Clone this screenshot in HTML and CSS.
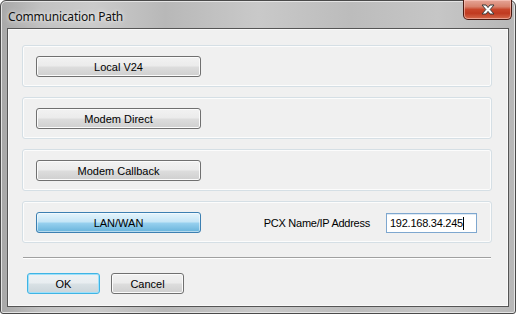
FILE: index.html
```html
<!DOCTYPE html>
<html>
<head>
<meta charset="utf-8">
<link rel="stylesheet" href="styles.css">
</head>
<body>
<div class="window">
  <div class="titlebar">
    <span class="title">Communication Path</span>
    <button class="close" aria-label="Close">
      <svg width="16" height="11" viewBox="0 0 16 11">
        <path d="M2 1 H6 L8 3.6 L10 1 H14 L10.2 5.5 L14 10 H10 L8 7.4 L6 10 H2 L5.8 5.5 Z" fill="#fff" stroke="#3b3b3b" stroke-width="1" stroke-linejoin="round"/>
      </svg>
    </button>
  </div>
  <div class="client">
    <div class="group"><button class="btn wide">Local V24</button></div>
    <div class="group"><button class="btn wide">Modem Direct</button></div>
    <div class="group"><button class="btn wide">Modem Callback</button></div>
    <div class="group">
      <button class="btn wide active">LAN/WAN</button>
      <span class="label">PCX Name/IP Address</span>
      <div class="field"><span>192.168.34.245</span><span class="caret"></span></div>
    </div>
    <div class="separator"></div>
    <div class="actions">
      <button class="btn small default">OK</button>
      <button class="btn small">Cancel</button>
    </div>
  </div>
</div>
</body>
</html>
```
FILE: styles.css
```css
html, body {
  margin: 0;
  padding: 0;
  background: #ffffff;
}
.window {
  width: 516px;
  height: 314px;
  box-sizing: border-box;
  border: 1px solid #4a4a4a;
  border-radius: 6px 6px 3px 3px;
  background: linear-gradient(to right, #a8a8a8 0%, #c2c2c2 8%, #cbcbcb 18%, #b8b8b8 32%, #c9c9c9 50%, #bcbcbc 68%, #c6c6c6 85%, #b7b7b7 100%);
  box-shadow: inset 0 0 0 1px #e4e4e4;
  padding: 0 6px 6px 6px;
  display: flex;
  flex-direction: column;
  font-family: "Liberation Sans", Arial, sans-serif;
}
.titlebar {
  height: 28px;
  display: flex;
  align-items: flex-start;
  justify-content: space-between;
  position: relative;
}
.title {
  font-family: "Noto Sans", "Open Sans", sans-serif;
  font-size: 12px;
  letter-spacing: -0.2px;
  color: #111;
  margin-top: 7px;
  margin-left: 1px;
  text-shadow: 0 0 6px rgba(255,255,255,0.8), 0 0 3px rgba(255,255,255,0.6);
}
.close {
  margin: -1px -3px 0 0;
  width: 49px;
  height: 20px;
  padding: 0;
  border: 1px solid #4b1a12;
  border-top: none;
  border-radius: 0 0 5px 5px;
  background: linear-gradient(to bottom, #e5a597 0%, #d8826d 35%, #c8462b 50%, #c03a20 70%, #d46a4c 100%);
  box-shadow: inset 0 0 0 1px rgba(255,210,200,0.55);
  display: flex;
  align-items: center;
  justify-content: center;
}
.client {
  flex: 1;
  border: 1px solid #555;
  background: #f0f0f0;
  padding: 16px 16px 12px 14px;
  display: flex;
  flex-direction: column;
  gap: 10px;
  box-shadow: inset 0 0 0 1px #fafafa;
}
.group {
  height: 42px;
  box-sizing: border-box;
  border: 1px solid #d5dfe5;
  border-radius: 3px;
  box-shadow: inset 0 0 0 1px #fcfcfc;
  padding: 10px 14px 9px 13px;
  display: flex;
  align-items: flex-start;
}
.btn {
  font-family: "Liberation Sans", Arial, sans-serif;
  font-size: 11px;
  font-weight: 400;
  letter-spacing: 0;
  color: #000;
  height: 21px;
  box-sizing: border-box;
  border: 1px solid #707070;
  border-radius: 3px;
  background: linear-gradient(to bottom, #f2f2f2 0%, #ebebeb 48%, #dddddd 52%, #cfcfcf 100%);
  box-shadow: inset 0 0 0 1px #fbfbfb;
  padding: 0;
  line-height: 18px;
}
.wide {
  width: 165px;
}
.active {
  border-color: #3c7fb1;
  background: linear-gradient(to bottom, #e5f4fc 0%, #c4e5f6 48%, #98d1ef 52%, #68b3db 100%);
  box-shadow: inset 0 0 0 1px rgba(255,255,255,0.5);
}
.label {
  margin-left: auto;
  font-size: 11px;
  letter-spacing: -0.25px;
  color: #000;
  line-height: 20px;
  margin-top: 1px;
}
.field {
  margin-left: 16px;
  margin-top: 1px;
  width: 91px;
  height: 20px;
  box-sizing: border-box;
  border: 1px solid #7ea7cf;
  box-shadow: inset 0 1px 0 #dfe9f3;
  background: #fff;
  font-size: 11px;
  letter-spacing: -0.25px;
  line-height: 18px;
  padding-left: 3px;
  display: flex;
  align-items: center;
}
.caret {
  width: 1px;
  height: 13px;
  background: #000;
}
.separator {
  margin: 4px 1px 0 1px;
  height: 1px;
  background: #a0a0a0;
  border-bottom: 1px solid #ffffff;
}
.actions {
  margin-top: 4px;
  margin-left: 5px;
  display: flex;
  gap: 11px;
}
.small {
  width: 73px;
}
.default {
  border-color: #3fb4e4;
  box-shadow: inset 0 0 0 1px #9fe0fa;
  background: linear-gradient(to bottom, #eef2f4 0%, #e8edf0 48%, #d9e1e5 52%, #cbd5da 100%);
}
```
